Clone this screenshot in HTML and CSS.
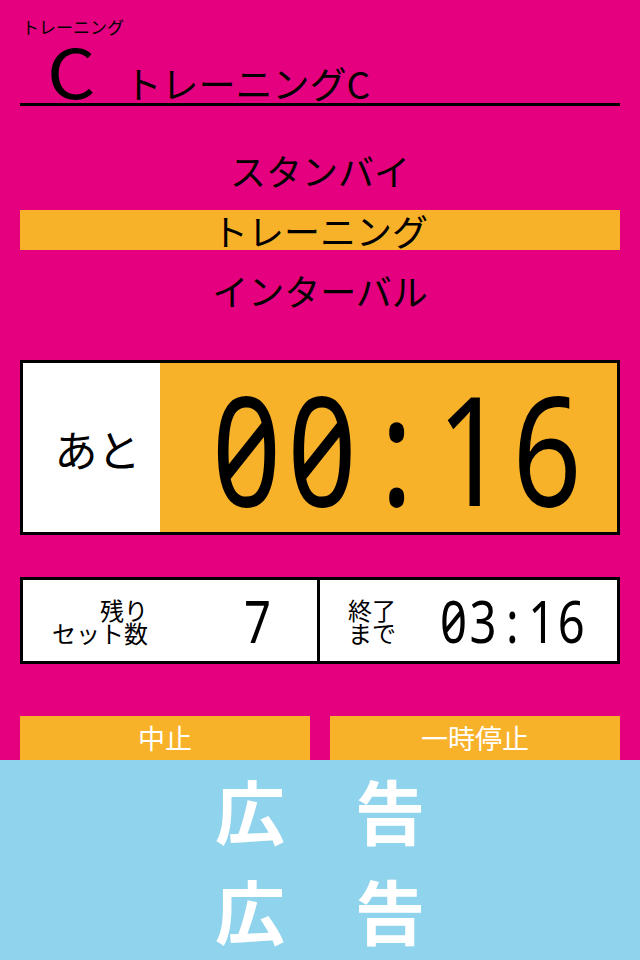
FILE: index.html
```html
<!DOCTYPE html>
<html lang="ja">
<head>
<meta charset="utf-8">
<link rel="stylesheet" href="styles.css">
</head>
<body>
<div class="screen">
  <header class="header">
    <div class="header-small">トレーニング</div>
    <div class="header-row">
      <span class="header-letter">C</span>
      <span class="header-title">トレーニングC</span>
    </div>
  </header>

  <div class="modes">
    <div class="mode">スタンバイ</div>
    <div class="mode mode-active">トレーニング</div>
    <div class="mode">インターバル</div>
  </div>

  <div class="timer">
    <div class="timer-label">あと</div>
    <div class="timer-value"><span class="digits digits-big">00<span class="colon">:</span>16</span></div>
  </div>

  <div class="stats">
    <div class="stat stat-left">
      <div class="stat-label stat-label-right">残り<br>セット数</div>
      <div class="stat-num stat-num-sets"><span class="digits digits-small">7</span></div>
    </div>
    <div class="stat stat-right">
      <div class="stat-label">終了<br>まで</div>
      <div class="stat-num stat-num-time"><span class="digits digits-small">03<span class="colon">:</span>16</span></div>
    </div>
  </div>

  <div class="buttons">
    <div class="btn">中止</div>
    <div class="btn">一時停止</div>
  </div>

  <div class="ad">
    <div class="ad-line">広　告</div>
    <div class="ad-line">広　告</div>
  </div>
</div>
</body>
</html>
```

FILE: styles.css
```css
html, body {
  margin: 0;
  padding: 0;
}
body {
  background: #e4007f;
  font-family: "Noto Sans CJK JP", "Noto Sans", sans-serif;
  color: #000;
}
.screen {
  width: 640px;
  height: 960px;
  overflow: hidden;
  display: flex;
  flex-direction: column;
}

/* header */
.header {
  margin: 0 20px;
  padding-top: 17px;
  border-bottom: 3px solid #000;
}
.header-small {
  font-size: 17px;
  line-height: 20px;
  padding-left: 2px;
}
.header-row {
  display: flex;
  align-items: baseline;
  height: 66px;
}
.header-letter {
  display: inline-block;
  font-size: 68px;
  line-height: 66px;
  margin-left: 27px;
  transform: scaleX(1.12);
  transform-origin: left center;
}
.header-title {
  font-size: 37px;
  line-height: 40px;
  margin-left: 34px;
}

/* modes */
.modes {
  margin-top: 44px;
  display: flex;
  flex-direction: column;
  gap: 20px;
}
.mode {
  margin: 0 20px;
  height: 40px;
  line-height: 40px;
  font-size: 36px;
  text-align: center;
}
.mode-active {
  background: #f8b229;
}

/* digits */
.digits {
  display: inline-block;
  font-family: "Noto Sans", sans-serif;
  font-feature-settings: "zero" 1, "tnum" 1;
  line-height: 1;
  white-space: nowrap;
  transform: scaleX(0.8);
}
.digits-big {
  font-size: 151px;
  letter-spacing: 8px;
  transform-origin: center center;
}
.digits-big .colon {
  margin: 0 22px;
}
.digits-small {
  font-size: 59px;
  letter-spacing: 3px;
  transform-origin: left center;
}
.digits-small .colon {
  margin: 0 9px;
}

/* timer */
.timer {
  margin: 50px 20px 0;
  height: 169px;
  border: 3px solid #000;
  display: flex;
}
.timer-label {
  flex: 0 0 137px;
  background: #fff;
  display: flex;
  align-items: center;
  justify-content: center;
  padding-left: 12px;
  box-sizing: border-box;
  font-size: 43px;
}
.timer-value {
  flex: 1;
  min-width: 0;
  background: #f8b229;
  display: flex;
  align-items: center;
  justify-content: center;
  padding-left: 22px;
}

/* stats */
.stats {
  margin: 42px 20px 0;
  height: 81px;
  border: 3px solid #000;
  background: #fff;
  display: flex;
}
.stat {
  display: flex;
  align-items: center;
  box-sizing: border-box;
  min-width: 0;
  overflow: hidden;
}
.stat-left {
  flex: 0 0 297px;
  border-right: 3px solid #000;
  padding-left: 29px;
}
.stat-right {
  flex: 1;
  padding-left: 28px;
}
.stat-label {
  flex-shrink: 0;
  white-space: nowrap;
  font-size: 24px;
  line-height: 23px;
}
.stat-label-right {
  text-align: right;
}
.stat-num {
  flex-shrink: 0;
}
.stat-num-sets {
  margin-left: 96px;
}
.stat-num-time {
  margin-left: 44px;
}

/* buttons */
.buttons {
  margin: 52px 20px 0;
  display: flex;
  gap: 20px;
}
.btn {
  flex: 1;
  height: 44px;
  line-height: 44px;
  background: #f8b229;
  color: #fff;
  font-size: 27px;
  text-align: center;
}

/* ad */
.ad {
  flex: 1;
  background: #8fd3ec;
  color: #fff;
  display: flex;
  flex-direction: column;
}
.ad-line {
  height: 100px;
  line-height: 100px;
  font-size: 70px;
  font-weight: bold;
  text-align: center;
}
```
